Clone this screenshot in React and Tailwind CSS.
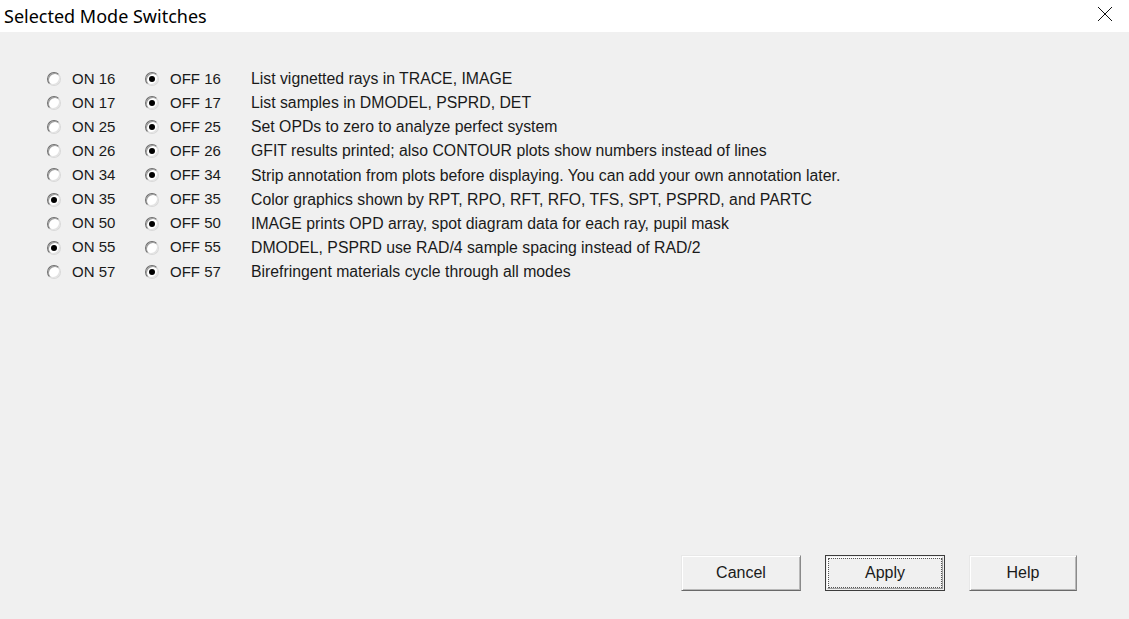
const rows = [
  { n: 16, on: false, desc: 'List vignetted rays in TRACE, IMAGE' },
  { n: 17, on: false, desc: 'List samples in DMODEL, PSPRD, DET' },
  { n: 25, on: false, desc: 'Set OPDs to zero to analyze perfect system' },
  { n: 26, on: false, desc: 'GFIT results printed; also CONTOUR plots show numbers instead of lines' },
  { n: 34, on: false, desc: 'Strip annotation from plots before displaying. You can add your own annotation later.' },
  { n: 35, on: true, desc: 'Color graphics shown by RPT, RPO, RFT, RFO, TFS, SPT, PSPRD, and PARTC' },
  { n: 50, on: false, desc: 'IMAGE prints OPD array, spot diagram data for each ray, pupil mask' },
  { n: 55, on: true, desc: 'DMODEL, PSPRD use RAD/4 sample spacing instead of RAD/2' },
  { n: 57, on: false, desc: 'Birefringent materials cycle through all modes' },
]

function Radio({ checked }) {
  return (
    <span className="flex h-[14px] w-[14px] shrink-0 items-center justify-center rounded-full border border-t-[#6e6e6e] border-l-[#6e6e6e] border-b-[#d8d8d8] border-r-[#d8d8d8] bg-white shadow-[inset_1px_1px_0_#9c9c9c,inset_-1px_-1px_0_#e2e2e2]">
      {checked && <span className="h-[6px] w-[6px] rounded-full bg-black" />}
    </span>
  )
}

function Option({ checked, label, width }) {
  return (
    <div className={`flex items-center ${width}`}>
      <Radio checked={checked} />
      <span className="ml-[11px]">{label}</span>
    </div>
  )
}

function Button({ children, focused, width }) {
  if (focused) {
    return (
      <button className={`${width} h-[36px] border border-[#3c3c3c] bg-[#f0f0f0] p-[1px]`}>
        <div className="flex h-full w-full items-center justify-center border border-t-white border-l-white border-b-[#a0a0a0] border-r-[#a0a0a0]">
          <div className="flex h-full w-full items-center justify-center border border-dotted border-[#555]">
            {children}
          </div>
        </div>
      </button>
    )
  }
  return (
    <button className={`${width} flex h-[36px] items-center justify-center border border-t-[#e8e8e8] border-l-[#e8e8e8] border-b-[#696969] border-r-[#8a8a8a] bg-[#f0f0f0] shadow-[inset_1px_1px_0_#ffffff,inset_-1px_-1px_0_#b9b9b9]`}>
      {children}
    </button>
  )
}

export default function App() {
  return (
    <div className="flex h-[619px] w-[1129px] flex-col bg-[#f0f0f0] font-['Liberation_Sans',Arial,sans-serif] text-[15px] text-[#1a1a1a]">
      <div className="flex h-[32px] items-center justify-between bg-white pl-[4px] pr-[16px]">
        <span className="font-['Noto_Sans',sans-serif] text-[18px] text-black">Selected Mode Switches</span>
        <svg width="16" height="16" viewBox="0 0 16 16" className="mb-[4px]">
          <path d="M1 1 L15 15 M15 1 L1 15" stroke="#111" strokeWidth="1" />
        </svg>
      </div>

      <div className="flex flex-col pl-[47px] pt-[35px]">
        {rows.map((r) => (
          <div key={r.n} className="flex h-[24.1px] items-center">
            <Option checked={r.on} label={`ON ${r.n}`} width="w-[98px]" />
            <Option checked={!r.on} label={`OFF ${r.n}`} width="w-[106px]" />
            <span className="text-[15.8px]">{r.desc}</span>
          </div>
        ))}
      </div>

      <div className="mt-auto mb-[28px] flex justify-end gap-[24px] pr-[52px] text-[16px]">
        <Button width="w-[120px]">Cancel</Button>
        <Button width="w-[120px]" focused>Apply</Button>
        <Button width="w-[108px]">Help</Button>
      </div>
    </div>
  )
}
